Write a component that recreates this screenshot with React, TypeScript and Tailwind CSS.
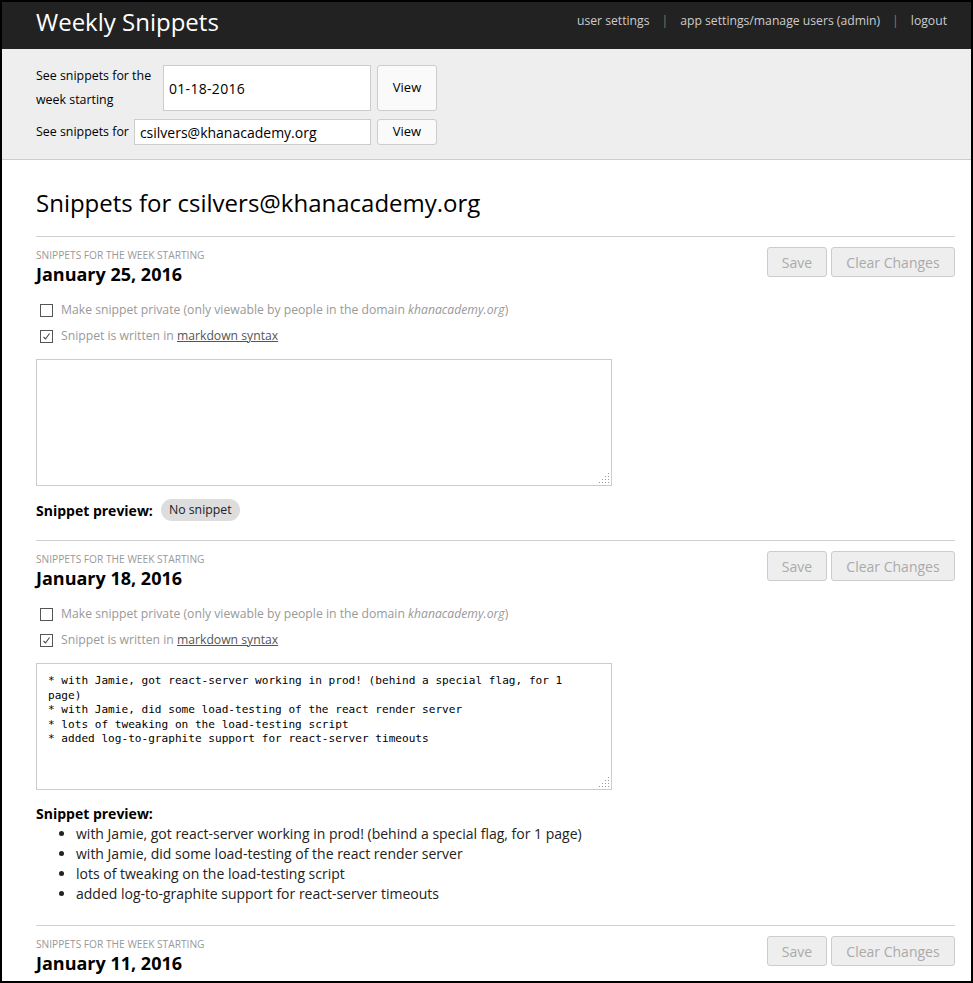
const font = { fontFamily: '"Open Sans", "Noto Sans", sans-serif' }

const bullets = [
  "with Jamie, got react-server working in prod! (behind a special flag, for 1 page)",
  "with Jamie, did some load-testing of the react render server",
  "lots of tweaking on the load-testing script",
  "added log-to-graphite support for react-server timeouts",
]

const snippetText = bullets.map((b) => "* " + b).join("\n")

const Checkbox = ({ checked }: { checked?: boolean }) => (
  <span className="inline-flex w-[13px] h-[13px] border border-[#555] bg-white items-center justify-center mr-[8px] shrink-0">
    {checked && (
      <svg width="9" height="9" viewBox="0 0 9 9">
        <path d="M1.5 5 L3.5 7 L7.5 1.5" fill="none" stroke="#444" strokeWidth="1.1" />
      </svg>
    )}
  </span>
)

const Grip = () => (
  <svg className="absolute right-[2px] bottom-[2px]" width="12" height="12" viewBox="0 0 12 12">
    {[[10, 2], [10, 5], [7, 5], [10, 8], [7, 8], [4, 8], [10, 11], [7, 11], [4, 11], [1, 11]].map(([x, y], i) => (
      <rect key={i} x={x} y={y - 1} width="1" height="1" fill="#999" />
    ))}
  </svg>
)

const Week = ({ date, text, last }: { date: string; text?: string; last?: boolean }) => (
  <section className={`border-t border-[#d0d0d0] ${text ? "pb-[21px]" : "pb-[19px]"}`}>
    <div className="flex justify-between items-start pt-[10px]">
      <div>
        <div className="text-[10.2px] leading-[14px] uppercase text-[#999] mt-[1px]">Snippets for the week starting</div>
        <h2 className="mt-[1px] text-[18px] leading-[22px] font-bold text-black">{date}</h2>
      </div>
      <div className="flex gap-[4px]">
        <button className="w-[60px] h-[30px] bg-[#eee] border border-[#ccc] rounded-[3px] text-[14px] text-[#aaa]">Save</button>
        <button className="w-[124px] h-[30px] bg-[#eee] border border-[#ccc] rounded-[3px] text-[14px] text-[#aaa]">Clear Changes</button>
      </div>
    </div>
    {!last && (
      <>
        <div className="mt-[12px] text-[12.2px] text-[#999]">
          <div className="flex items-center h-[26px] pl-[4px]">
            <Checkbox />
            <span>Make snippet private (only viewable by people in the domain <i>khanacademy.org</i>)</span>
          </div>
          <div className="flex items-center h-[26px] pl-[4px]">
            <Checkbox checked />
            <span>Snippet is written in <a className="underline text-[#555]">markdown syntax</a></span>
          </div>
        </div>
        <div className="relative mt-[10px] w-[576px] h-[127px]">
          <textarea
            readOnly
            value={text ?? ""}
            className="block w-full h-full resize-none border border-[#ccc] bg-white pl-[11px] pr-[24px] pt-[10px] text-[11.1px] leading-[14.5px] text-black outline-none overflow-hidden"
            style={{ fontFamily: '"DejaVu Sans Mono", monospace' }}
          />
          <Grip />
        </div>
        {text ? (
          <div className="mt-[14px]">
            <div className="text-[14px] leading-[20px] font-bold text-black">Snippet preview:</div>
            <ul className="list-disc pl-[40px] text-[14px] leading-[20px] text-[#222]">
              {bullets.map((b) => (
                <li key={b}>{b}</li>
              ))}
            </ul>
          </div>
        ) : (
          <div className="mt-[13px] flex items-center">
            <span className="text-[14px] font-bold text-black mr-[8px]">Snippet preview:</span>
            <span className="h-[22px] px-[8px] rounded-full bg-[#ddd] text-[12.3px] leading-[22px] text-[#222]">No snippet</span>
          </div>
        )}
      </>
    )}
  </section>
)

const App = () => {
  return (
    <div className="w-[973px] h-[983px] overflow-hidden border-2 border-black bg-white" style={font}>
      {/* header */}
      <header className="h-[47px] bg-[#222] flex items-center justify-between pl-[34px] pr-[24px]">
        <h1 className="text-[24px] text-white leading-none -mt-[7px]">Weekly Snippets</h1>
        <nav className="flex items-center text-[12.2px] text-[#ccc] -mt-[8px]">
          <a>user settings</a>
          <span className="mx-[12px] text-[#8a7c5e]">|</span>
          <a>app settings/manage users (admin)</a>
          <span className="mx-[12px] text-[#8a7c5e]">|</span>
          <a>logout</a>
        </nav>
      </header>

      {/* week / user picker */}
      <div className="bg-[#eee] border-b border-[#ccc] pl-[34px] pt-[15px] pb-[14px] text-[12.4px] text-black">
        <div className="flex items-center">
          <div className="w-[122px] leading-[24px]">See snippets for the week starting</div>
          <input readOnly value="01-18-2016" className="ml-[5px] w-[208px] h-[46px] border border-[#ccc] bg-white px-[5px] text-[14px] tracking-[0.3px] outline-none" />
          <button className="ml-[6px] w-[60px] h-[46px] border border-[#ccc] rounded-[3px] bg-[#fafafa] text-[13px]">View</button>
        </div>
        <div className="flex items-center mt-[7px]">
          <div>See snippets for</div>
          <input readOnly value="csilvers@khanacademy.org" className="ml-[5px] w-[237px] h-[26px] border border-[#ccc] bg-white px-[5px] text-[14px] outline-none" />
          <button className="ml-[6px] w-[60px] h-[26px] border border-[#ccc] rounded-[3px] bg-[#fafafa] text-[13px]">View</button>
        </div>
      </div>

      {/* snippets */}
      <main className="pl-[34px] pr-[16px]">
        <h1 className="text-[24px] leading-[32px] text-black pt-[27px] pb-[17px]">Snippets for csilvers@khanacademy.org</h1>
        <Week date="January 25, 2016" />
        <Week date="January 18, 2016" text={snippetText} />
        <Week date="January 11, 2016" last />
      </main>
    </div>
  )
}

export default App
